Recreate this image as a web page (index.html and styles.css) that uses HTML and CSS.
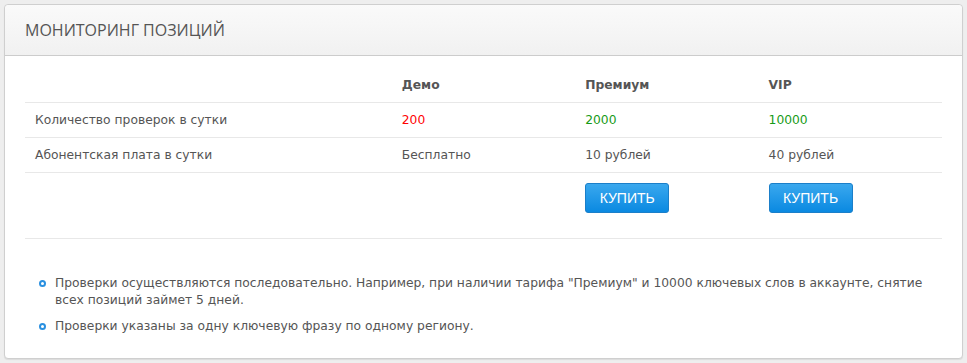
FILE: index.html
```html
<!DOCTYPE html>
<html lang="ru">
<head>
<meta charset="UTF-8">
<title>Мониторинг позиций</title>
<link rel="stylesheet" href="styles.css">
</head>
<body>
  <div class="panel">
    <div class="panel-head">
      <h2>МОНИТОРИНГ ПОЗИЦИЙ</h2>
    </div>
    <div class="panel-body">
      <table class="tariffs">
        <tr class="head">
          <td class="label"></td>
          <td>Демо</td>
          <td>Премиум</td>
          <td>VIP</td>
        </tr>
        <tr>
          <td class="label">Количество проверок в сутки</td>
          <td class="red">200</td>
          <td class="green">2000</td>
          <td class="green">10000</td>
        </tr>
        <tr>
          <td class="label">Абонентская плата в сутки</td>
          <td>Бесплатно</td>
          <td>10 рублей</td>
          <td>40 рублей</td>
        </tr>
        <tr class="buy">
          <td class="label"></td>
          <td></td>
          <td><a class="btn" href="#">КУПИТЬ</a></td>
          <td><a class="btn" href="#">КУПИТЬ</a></td>
        </tr>
      </table>
      <ul class="notes">
        <li>Проверки осуществляются последовательно. Например, при наличии тарифа "Премиум" и 10000 ключевых слов в аккаунте, снятие всех позиций займет 5 дней.</li>
        <li>Проверки указаны за одну ключевую фразу по одному региону.</li>
      </ul>
    </div>
  </div>
</body>
</html>
```

FILE: styles.css
```css
body {
    margin: 0;
    padding: 4px;
    background-color: #eeeeee;
    font-family: "DejaVu Sans", Verdana, sans-serif;
    font-size: 12.3px;
    color: #555555;
}
.panel {
    background-color: #ffffff;
    border: 1px solid #cfcfcf;
    border-radius: 4px;
    box-shadow: 0 1px 1px rgba(0, 0, 0, 0.08);
}
.panel-head {
    height: 50px;
    background: linear-gradient(#fafafa, #f1f1f1);
    border-bottom: 1px solid #cccccc;
    border-radius: 4px 4px 0 0;
    display: flex;
    align-items: center;
    padding: 0 20px;
}
.panel-head h2 {
    margin: 0;
    font-family: "Open Sans", sans-serif;
    font-weight: normal;
    font-size: 16px;
    color: #555555;
}
.panel-body {
    padding: 10px 20px 14px 20px;
}
.tariffs {
    width: 100%;
    border-collapse: collapse;
}
.tariffs td {
    width: 20%;
    padding: 0 10px;
    height: 34px;
    border-bottom: 1px solid #e8e8e8;
    vertical-align: middle;
}
.tariffs td.label {
    width: 40%;
}
.tariffs tr.head td {
    font-weight: bold;
    padding-top: 2px;
}
.tariffs tr.buy td {
    height: 55px;
    vertical-align: top;
    padding-top: 10px;
}
.red {
    color: #ff0000;
}
.green {
    color: #169a16;
}
.btn {
    display: inline-block;
    width: 84px;
    height: 30px;
    box-sizing: border-box;
    line-height: 28px;
    text-align: center;
    text-decoration: none;
    font-family: "Liberation Sans", Arial, sans-serif;
    font-size: 14px;
    color: #ffffff;
    background: linear-gradient(#3aa8ee, #0a89e1);
    border: 1px solid #1b7fc9;
    border-radius: 3px;
}
.notes {
    list-style: none;
    margin: 36px 0 0 0;
    padding: 0 0 0 10px;
}
.notes li {
    position: relative;
    padding-left: 20px;
    line-height: 17px;
    margin-bottom: 9px;
}
.notes li::before {
    content: "";
    position: absolute;
    left: 4px;
    top: 5px;
    width: 3px;
    height: 3px;
    border: 2px solid #2a90e0;
    border-radius: 50%;
}
```
